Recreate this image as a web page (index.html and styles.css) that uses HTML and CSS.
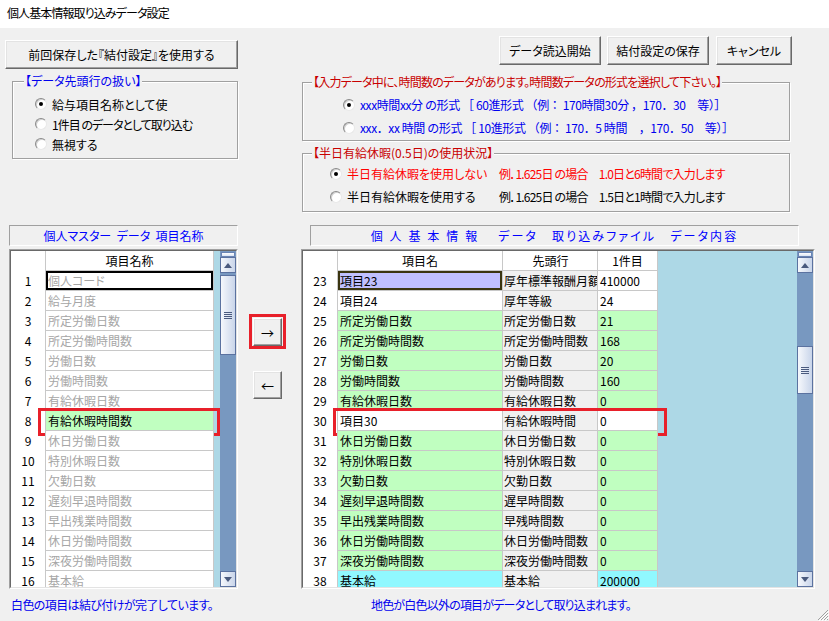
FILE: index.html
```html
<!DOCTYPE html>
<html lang="ja">
<head>
<meta charset="utf-8">
<title>個人基本情報取り込みデータ設定</title>
<link rel="stylesheet" href="styles.css">
</head>
<body>
<div class="window">
  <div class="titlebar">個人基本情報取り込みデータ設定</div>
  <div class="content">
    <div class="top">
      <div class="top-left">
        <button class="btn btn-prev">前回保存した『結付設定』を使用する</button>
        <div class="group group-left">
          <div class="legend legend-left blue">【データ先頭行の扱い】</div>
          <div class="opts opts-left">
            <div class="opt"><span class="radio on"></span>給与項目名称として使</div>
            <div class="opt"><span class="radio"></span><span class="tight">1件目 のデータとして取り込む</span></div>
            <div class="opt"><span class="radio"></span>無視する</div>
          </div>
        </div>
      </div>
      <div class="top-right">
        <div class="btn-row">
          <button class="btn btn-load">データ読込開始</button>
          <button class="btn btn-save">結付設定の保存</button>
          <button class="btn btn-cancel">キャンセル</button>
        </div>
        <div class="group group-fmt">
          <div class="legend legend-fmt dred">【入力データ中に、時間数のデータがあります。時間数データの形式を選択して下さい。】</div>
          <div class="opts opts-fmt">
            <div class="opt blue"><span class="radio on"></span>xxx時間xx分 の形式 ［ 60進形式 （例： 170時間30分 ，170．30　等）］</div>
            <div class="opt blue"><span class="radio"></span>xxx．xx 時間 の形式 ［ 10進形式 （例： 170．5 時間　，170．50　等）］</div>
          </div>
        </div>
        <div class="group group-half">
          <div class="legend dred">【半日有給休暇(0.5日)の使用状況】</div>
          <div class="opts opts-half">
            <div class="opt red"><span class="radio on"></span><span class="half-label">半日有給休暇を使用しない</span><span class="example">例．1.625日 の場合　1.0日と6時間で入力します</span></div>
            <div class="opt"><span class="radio"></span><span class="half-label">半日有給休暇を使用する</span><span class="example">例．1.625日 の場合　1.5日と1時間で入力します</span></div>
          </div>
        </div>
      </div>
    </div>

    <div class="mid">
      <div class="col-left">
        <div class="caption">個人マスター&nbsp;&nbsp;データ&nbsp;&nbsp;項目名称</div>
        <div class="grid">
          <div class="grid-inner">
            <div class="cells cells-left">
              <div class="row hdr"><div class="rn"></div><div class="cell c-name c-center">項目名称</div></div>
              <div class="row"><div class="rn">1</div><div class="cell c-name dim focus-black">個人コード</div></div>
              <div class="row"><div class="rn">2</div><div class="cell c-name dim">給与月度</div></div>
              <div class="row"><div class="rn">3</div><div class="cell c-name dim">所定労働日数</div></div>
              <div class="row"><div class="rn">4</div><div class="cell c-name dim">所定労働時間数</div></div>
              <div class="row"><div class="rn">5</div><div class="cell c-name dim">労働日数</div></div>
              <div class="row"><div class="rn">6</div><div class="cell c-name dim">労働時間数</div></div>
              <div class="row"><div class="rn">7</div><div class="cell c-name dim">有給休暇日数</div></div>
              <div class="row"><div class="rn">8</div><div class="cell c-name green">有給休暇時間数</div><span class="mark mark-left"></span></div>
              <div class="row"><div class="rn">9</div><div class="cell c-name dim">休日労働日数</div></div>
              <div class="row"><div class="rn">10</div><div class="cell c-name dim">特別休暇日数</div></div>
              <div class="row"><div class="rn">11</div><div class="cell c-name dim">欠勤日数</div></div>
              <div class="row"><div class="rn">12</div><div class="cell c-name dim">遅刻早退時間数</div></div>
              <div class="row"><div class="rn">13</div><div class="cell c-name dim">早出残業時間数</div></div>
              <div class="row"><div class="rn">14</div><div class="cell c-name dim">休日労働時間数</div></div>
              <div class="row"><div class="rn">15</div><div class="cell c-name dim">深夜労働時間数</div></div>
              <div class="row"><div class="rn">16</div><div class="cell c-name dim">基本給</div></div>
            </div>
            <div class="fill fill-left"></div>
            <div class="sb">
              <div class="sb-split"></div>
              <div class="sb-btn"><span class="tri-up"></span></div>
              <div class="sb-track"><div class="sb-thumb thumb-left"><span class="grip"></span></div></div>
              <div class="sb-btn"><span class="tri-down"></span></div>
            </div>
          </div>
        </div>
        <div class="note note-left">白色の項目は結び付けが完了しています。</div>
      </div>

      <div class="col-arrows">
        <div class="arrow-wrap arrow-right">
          <button class="btn btn-arrow">→</button>
          <span class="mark mark-arrow"></span>
        </div>
        <div class="arrow-wrap arrow-left">
          <button class="btn btn-arrow">←</button>
        </div>
      </div>

      <div class="col-right">
        <div class="caption caption-right">個&nbsp;人&nbsp;基&nbsp;本&nbsp;情&nbsp;報　&nbsp;データ　取り込みファイル　データ内容</div>
        <div class="grid">
          <div class="grid-inner">
            <div class="cells cells-right">
              <div class="row hdr"><div class="rn"></div><div class="cell c-item c-center">項目名</div><div class="cell c-head c-center">先頭行</div><div class="cell c-first c-center">1件目</div></div>
              <div class="row"><div class="rn">23</div><div class="cell c-item lav focus-dark">項目23</div><div class="cell c-head gray">厚年標準報酬月額</div><div class="cell c-first">410000</div></div>
              <div class="row"><div class="rn">24</div><div class="cell c-item">項目24</div><div class="cell c-head gray">厚年等級</div><div class="cell c-first">24</div></div>
              <div class="row"><div class="rn">25</div><div class="cell c-item green">所定労働日数</div><div class="cell c-head gray">所定労働日数</div><div class="cell c-first green">21</div></div>
              <div class="row"><div class="rn">26</div><div class="cell c-item green">所定労働時間数</div><div class="cell c-head gray">所定労働時間数</div><div class="cell c-first green">168</div></div>
              <div class="row"><div class="rn">27</div><div class="cell c-item green">労働日数</div><div class="cell c-head gray">労働日数</div><div class="cell c-first green">20</div></div>
              <div class="row"><div class="rn">28</div><div class="cell c-item green">労働時間数</div><div class="cell c-head gray">労働時間数</div><div class="cell c-first green">160</div></div>
              <div class="row"><div class="rn">29</div><div class="cell c-item green">有給休暇日数</div><div class="cell c-head gray">有給休暇日数</div><div class="cell c-first green">0</div></div>
              <div class="row"><div class="rn">30</div><div class="cell c-item">項目30</div><div class="cell c-head gray">有給休暇時間</div><div class="cell c-first">0</div><span class="mark mark-right"></span></div>
              <div class="row"><div class="rn">31</div><div class="cell c-item green">休日労働日数</div><div class="cell c-head gray">休日労働日数</div><div class="cell c-first green">0</div></div>
              <div class="row"><div class="rn">32</div><div class="cell c-item green">特別休暇日数</div><div class="cell c-head gray">特別休暇日数</div><div class="cell c-first green">0</div></div>
              <div class="row"><div class="rn">33</div><div class="cell c-item green">欠勤日数</div><div class="cell c-head gray">欠勤日数</div><div class="cell c-first green">0</div></div>
              <div class="row"><div class="rn">34</div><div class="cell c-item green">遅刻早退時間数</div><div class="cell c-head gray">遅早時間数</div><div class="cell c-first green">0</div></div>
              <div class="row"><div class="rn">35</div><div class="cell c-item green">早出残業時間数</div><div class="cell c-head gray">早残時間数</div><div class="cell c-first green">0</div></div>
              <div class="row"><div class="rn">36</div><div class="cell c-item green">休日労働時間数</div><div class="cell c-head gray">休日労働時間数</div><div class="cell c-first green">0</div></div>
              <div class="row"><div class="rn">37</div><div class="cell c-item green">深夜労働時間数</div><div class="cell c-head gray">深夜労働時間数</div><div class="cell c-first green">0</div></div>
              <div class="row"><div class="rn">38</div><div class="cell c-item cyan">基本給</div><div class="cell c-head gray">基本給</div><div class="cell c-first cyan">200000</div></div>
            </div>
            <div class="fill fill-right"></div>
            <div class="sb">
              <div class="sb-split"></div>
              <div class="sb-btn"><span class="tri-up"></span></div>
              <div class="sb-track"><div class="sb-thumb thumb-right"><span class="grip"></span></div></div>
              <div class="sb-btn"><span class="tri-down"></span></div>
            </div>
          </div>
        </div>
        <div class="note note-right">地色が白色以外の項目がデータとして取り込まれます。</div>
      </div>
    </div>
  </div>
  <svg class="grip-corner" width="12" height="12" viewBox="0 0 12 12">
    <path d="M11 1 L1 11 M11 4 L4 11 M11 7 L7 11 M11 10 L10 11" stroke="#a0a0a0" stroke-width="1"/>
    <path d="M12 2 L2 12 M12 5 L5 12 M12 8 L8 12" stroke="#ffffff" stroke-width="1"/>
  </svg>
</div>
</body>
</html>
```
FILE: styles.css
```css
* { box-sizing: border-box; }
html, body { margin: 0; padding: 0; }
body {
  width: 829px;
  height: 621px;
  overflow: hidden;
  background: #f0f0f0;
  color: #000;
  font-family: "Noto Sans CJK JP", "Noto Sans", sans-serif;
  font-size: 12px;
  font-feature-settings: "palt";
}
.window { position: relative; width: 829px; height: 621px; }
.titlebar {
  height: 28px;
  background: #fff;
  padding-left: 7px;
  line-height: 26px;
  font-size: 12px;
  letter-spacing: -0.9px;
}
.blue { color: #0000ee; }
.red { color: #ff0000; }
.dred { color: #c80000; }

/* buttons */
.btn {
  display: flex;
  align-items: center;
  justify-content: center;
  padding: 0;
  margin: 0;
  font: inherit;
  font-feature-settings: "palt";
  color: #000;
  background: #f0f0f0;
  border: 1px solid;
  border-color: #ffffff #696969 #696969 #ffffff;
  box-shadow: inset -1px -1px 0 #a0a0a0, inset 1px 1px 0 #e3e3e3;
}

/* top */
.top { display: flex; }
.top-left { width: 302px; padding-left: 5px; }
.btn-prev { width: 233px; height: 29px; margin-top: 12px; font-size: 12px; }
.top-right { width: 490px; }
.btn-row { display: flex; justify-content: flex-end; margin-top: 8px; }
.btn-row .btn { height: 29px; }
.btn-load { width: 102px; }
.btn-save { width: 102px; margin-left: 6px; }
.btn-cancel { width: 76px; margin-left: 7px; }

.group {
  border: 1px solid #a0a0a0;
  box-shadow: 1px 1px 0 #fff, inset 1px 1px 0 #fff;
}
.legend {
  display: table;
  margin: -8px 0 0 9px;
  padding: 0 1px;
  background: #f0f0f0;
  line-height: 14px;
  height: 14px;
  white-space: nowrap;
}
.legend-left { margin-left: 11px; }
.legend-fmt { letter-spacing: -0.8px; }
.group-left { width: 226px; height: 78px; margin: 12px 0 0 7px; }
.opts-left { margin-top: 6px; padding-left: 22px; }
.opts-left .opt { height: 20px; }
.tight { letter-spacing: -1px; }

.group-fmt { width: 488px; height: 59px; margin-top: 17px; }
.opts-fmt { margin-top: 4px; padding-left: 40px; }
.opts-fmt .opt { height: 23px; font-feature-settings: normal; letter-spacing: -0.4px; }

.group-half { width: 488px; height: 59px; margin-top: 12px; }
.opts-half { margin-top: 2px; padding-left: 27px; }
.opts-half .opt { height: 23px; }
.half-label { width: 152px; }
.example { letter-spacing: -0.8px; }

.opt { display: flex; align-items: center; white-space: nowrap; }
.radio {
  position: relative;
  flex: none;
  width: 12px;
  height: 12px;
  margin-right: 5px;
  border-radius: 50%;
  background: #fff;
  border: 1px solid;
  border-color: #8a8a8a #e8e8e8 #e8e8e8 #8a8a8a;
  box-shadow: inset 1px 1px 0 #d0d0d0;
}
.radio.on::after {
  content: "";
  position: absolute;
  left: 3px;
  top: 3px;
  width: 4px;
  height: 4px;
  border-radius: 50%;
  background: #000;
}

/* middle */
.mid { display: flex; margin-top: 13px; }
.col-left { width: 229px; margin-left: 9px; }
.col-arrows { width: 63px; }
.col-right { width: 514px; }

.caption {
  height: 21px;
  border: 1px solid;
  border-color: #a0a0a0 #ffffff #ffffff #a0a0a0;
  color: #0000ff;
  text-align: center;
  line-height: 19px;
  white-space: nowrap;
}
.caption-right {
  width: 489px;
  margin-left: 9px;
  letter-spacing: 2.1px;
}

.grid {
  margin-top: 3px;
  height: 340px;
  border: 1px solid;
  border-color: #a0a0a0 #ffffff #ffffff #a0a0a0;
}
.grid-inner {
  height: 100%;
  display: flex;
  overflow: hidden;
  background: #add8e6;
  border: 1px solid;
  border-color: #696969 #e3e3e3 #e3e3e3 #696969;
}
.cells { background: #fff; flex: none; }
.cells-left { width: 203px; }
.cells-right { width: 355px; }
.fill-left { width: 6px; flex: none; }
.fill-right { width: 139px; flex: none; }

.row { display: flex; height: 20px; position: relative; }
.rn {
  width: 35px;
  flex: none;
  border-right: 1px solid #c8c8c8;
  text-align: center;
  line-height: 19px;
}
.cell {
  flex: none;
  height: 20px;
  padding-left: 2px;
  border-right: 1px solid #c8c8c8;
  border-bottom: 1px solid #c8c8c8;
  line-height: 19px;
  white-space: nowrap;
  overflow: hidden;
  background: #fff;
}
.c-center { text-align: center; padding-left: 0; }
.c-name { width: 168px; }
.c-item { width: 165px; }
.c-head { width: 95px; padding-left: 1px; }
.c-first { width: 60px; }
.dim { color: #a6a6a6; }
.green { background: #c0ffc0; }
.cyan { background: #90f8ff; }
.lav { background: #c0c0ff; }
.gray { background: #f0f0f0; }
.focus-black { box-shadow: inset 0 0 0 2px #000; }
.focus-dark { box-shadow: inset 0 0 0 2px #3a3510; }

/* scrollbar */
.sb {
  width: 16px;
  flex: none;
  display: flex;
  flex-direction: column;
  background: #7898c0;
}
.sb-split {
  height: 5px;
  margin: 1px 1px 0;
  border: 1px solid #6a84b4;
  background: linear-gradient(#ffffff, #d8e2f2);
}
.sb-btn {
  height: 16px;
  flex: none;
  display: flex;
  align-items: center;
  justify-content: center;
  border: 1px solid #5b72a0;
  background: linear-gradient(to right, #f6f8fc, #c9d5ea);
}
.tri-up {
  width: 0; height: 0;
  border-left: 4px solid transparent;
  border-right: 4px solid transparent;
  border-bottom: 5px solid #4a5a7e;
}
.tri-down {
  width: 0; height: 0;
  border-left: 4px solid transparent;
  border-right: 4px solid transparent;
  border-top: 5px solid #4a5a7e;
}
.sb-track { flex: 1; }
.sb-thumb {
  display: flex;
  align-items: center;
  justify-content: center;
  border: 1px solid #5b72a0;
  background: linear-gradient(to right, #f6f8fc, #c9d5ea);
}
.thumb-left { height: 80px; margin-top: 2px; }
.thumb-right { height: 48px; margin-top: 73px; }
.grip {
  width: 8px;
  height: 7px;
  background: repeating-linear-gradient(#4a5a7e 0 1px, transparent 1px 2px);
}

/* arrows */
.arrow-wrap { position: relative; width: 29px; margin-left: 15px; }
.arrow-right { margin-top: 93px; }
.arrow-left { margin-top: 25px; }
.btn-arrow { width: 29px; height: 28px; font-size: 13px; }

/* annotation marks */
.mark {
  position: absolute;
  border: 3px solid #e8202a;
  pointer-events: none;
}
.mark-arrow { left: -4px; top: -4px; width: 37px; height: 35px; }
.mark-left { left: 27px; top: -3px; width: 182px; height: 28px; }
.mark-right { left: 30px; top: -3px; width: 334px; height: 28px; }

.note {
  margin-top: 9px;
  line-height: 14px;
  color: #0000ee;
  white-space: nowrap;
}
.note-left { margin-left: 2px; letter-spacing: -0.6px; }
.note-right { margin-left: 70px; letter-spacing: -0.8px; }

.grip-corner { position: absolute; right: 0; bottom: 0; }
```
